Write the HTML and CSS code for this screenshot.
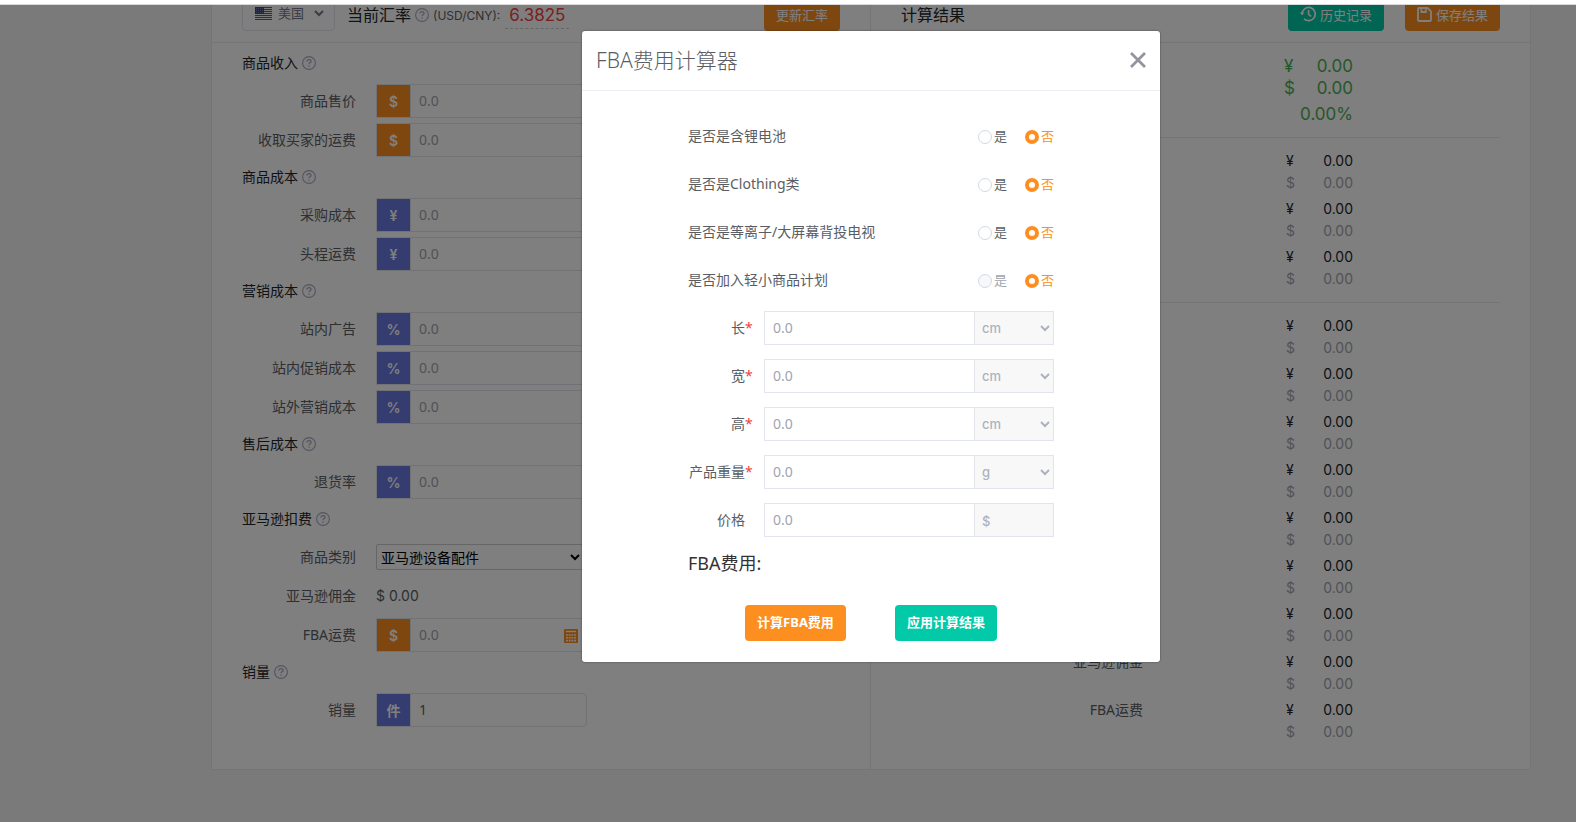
FILE: index.html
```html
<!DOCTYPE html>
<html lang="zh-CN">
<head>
  <meta charset="UTF-8">
  <title>FBA费用计算器</title>
  <link rel="stylesheet" href="styles.css">
</head>
<body>

  <svg class="sprite" aria-hidden="true">
    <symbol id="help" viewBox="0 0 14 14">
      <circle cx="7" cy="7" r="6.4" fill="none" stroke="currentColor" stroke-width="1.1"/>
      <path d="M5 5.6c0-1.3.9-2 2-2s2 .7 2 1.8c0 1.4-2 1.5-2 2.9M7 9.4v1.3" fill="none" stroke="currentColor" stroke-width="1.3"/>
    </symbol>
  </svg>

  <div class="topbar"></div>

  <div class="page">
    <main class="calculator">

      <section class="panel">
        <header class="panel-head">
          <div class="country">
            <svg class="flag" viewBox="0 0 17 13" width="17" height="13">
              <rect width="17" height="13" fill="#f5f5f5"/>
              <path d="M0 .5h17M0 2.5h17M0 4.5h17M0 6.5h17M0 8.5h17M0 10.5h17M0 12.5h17" stroke="#c4324b"/>
              <rect width="9" height="7" fill="#3c4a7c"/>
              <path d="M1 1.5h7M1 3.5h7M1 5.5h7" stroke="#8f9bc4" stroke-width=".7" stroke-dasharray="1 1"/>
            </svg>
            <select aria-label="国家"><option>美国</option></select>
          </div>
          <h3 class="rate-title">当前汇率</h3>
          <svg class="help"><use href="#help"/></svg>
          <span class="pair">(USD/CNY):</span>
          <span class="rate">6.3825</span>
          <button class="btn btn-orange push">更新汇率</button>
        </header>

        <div class="panel-body">
          <h4>商品收入<svg class="help"><use href="#help"/></svg></h4>
          <div class="row">
            <label for="price">商品售价</label>
            <div class="group"><span class="unit orange">$</span><input id="price" placeholder="0.0"></div>
          </div>
          <div class="row">
            <label for="buyerShip">收取买家的运费</label>
            <div class="group"><span class="unit orange">$</span><input id="buyerShip" placeholder="0.0"></div>
          </div>

          <h4>商品成本<svg class="help"><use href="#help"/></svg></h4>
          <div class="row">
            <label for="purchase">采购成本</label>
            <div class="group"><span class="unit">¥</span><input id="purchase" placeholder="0.0"></div>
          </div>
          <div class="row">
            <label for="firstLeg">头程运费</label>
            <div class="group"><span class="unit">¥</span><input id="firstLeg" placeholder="0.0"></div>
          </div>

          <h4>营销成本<svg class="help"><use href="#help"/></svg></h4>
          <div class="row">
            <label for="ads">站内广告</label>
            <div class="group"><span class="unit">%</span><input id="ads" placeholder="0.0"></div>
          </div>
          <div class="row">
            <label for="promo">站内促销成本</label>
            <div class="group"><span class="unit">%</span><input id="promo" placeholder="0.0"></div>
          </div>
          <div class="row">
            <label for="offsite">站外营销成本</label>
            <div class="group"><span class="unit">%</span><input id="offsite" placeholder="0.0"></div>
          </div>

          <h4>售后成本<svg class="help"><use href="#help"/></svg></h4>
          <div class="row">
            <label for="returns">退货率</label>
            <div class="group"><span class="unit">%</span><input id="returns" placeholder="0.0"></div>
          </div>

          <h4>亚马逊扣费<svg class="help"><use href="#help"/></svg></h4>
          <div class="row">
            <label for="category">商品类别</label>
            <select id="category" class="category"><option>亚马逊设备配件</option></select>
          </div>
          <div class="row">
            <span class="row-label">亚马逊佣金</span>
            <span class="commission">$ 0.00</span>
          </div>
          <div class="row">
            <label for="fbaFee">FBA运费</label>
            <div class="group">
              <span class="unit orange">$</span><input id="fbaFee" placeholder="0.0">
              <button class="calc" aria-label="计算FBA费用">
                <svg viewBox="0 0 14 14" width="14" height="14">
                  <rect width="14" height="14" rx="1" fill="#fd8f20"/>
                  <path d="M2 2.5h10" stroke="#fff" stroke-width="1.4"/>
                  <path d="M2 6h10M2 8.8h10M2 11.6h10" stroke="#fff" stroke-width="1.6" stroke-dasharray="1.9 .8"/>
                </svg>
              </button>
            </div>
          </div>

          <h4>销量<svg class="help"><use href="#help"/></svg></h4>
          <div class="row">
            <label for="sales">销量</label>
            <div class="group"><span class="unit">件</span><input id="sales" value="1"></div>
          </div>
        </div>
      </section>

      <section class="panel">
        <header class="panel-head">
          <h3>计算结果</h3>
          <button class="btn btn-teal push">
            <svg viewBox="0 0 16 16" width="16" height="16" fill="none" stroke="currentColor" stroke-width="1.7">
              <path d="M2 8a6.6 6.6 0 1 1 2 4.8M8.6 4v4.4l2.6 2"/>
              <path d="M0 6.6h4.4L2 9.6z" fill="currentColor" stroke="none"/>
            </svg>
            历史记录
          </button>
          <button class="btn btn-orange save">
            <svg viewBox="0 0 15 15" width="15" height="15" fill="none" stroke="currentColor" stroke-width="1.8">
              <path d="M2 1h8.6L14 4.4V13a1 1 0 0 1-1 1H2a1 1 0 0 1-1-1V2a1 1 0 0 1 1-1zM4.4 1v4h4.4V1"/>
            </svg>
            保存结果
          </button>
        </header>

        <div class="results">
          <div class="result big">
            <span class="name">利润</span>
            <div class="amounts"><p><span>¥</span><span>0.00</span></p><p><span>$</span><span>0.00</span></p></div>
          </div>
          <div class="result big">
            <span class="name">利润率</span>
            <div class="amounts"><p class="percent">0.00%</p></div>
          </div>
          <hr>
          <div class="result">
            <span class="name">总收入</span>
            <div class="amounts"><p><span>¥</span><span>0.00</span></p><p><span>$</span><span>0.00</span></p></div>
          </div>
          <div class="result">
            <span class="name">商品售价</span>
            <div class="amounts"><p><span>¥</span><span>0.00</span></p><p><span>$</span><span>0.00</span></p></div>
          </div>
          <div class="result">
            <span class="name">买家运费</span>
            <div class="amounts"><p><span>¥</span><span>0.00</span></p><p><span>$</span><span>0.00</span></p></div>
          </div>
          <hr>
          <div class="result">
            <span class="name">总成本</span>
            <div class="amounts"><p><span>¥</span><span>0.00</span></p><p><span>$</span><span>0.00</span></p></div>
          </div>
          <div class="result">
            <span class="name">采购成本</span>
            <div class="amounts"><p><span>¥</span><span>0.00</span></p><p><span>$</span><span>0.00</span></p></div>
          </div>
          <div class="result">
            <span class="name">头程运费</span>
            <div class="amounts"><p><span>¥</span><span>0.00</span></p><p><span>$</span><span>0.00</span></p></div>
          </div>
          <div class="result">
            <span class="name">站内广告</span>
            <div class="amounts"><p><span>¥</span><span>0.00</span></p><p><span>$</span><span>0.00</span></p></div>
          </div>
          <div class="result">
            <span class="name">站内促销成本</span>
            <div class="amounts"><p><span>¥</span><span>0.00</span></p><p><span>$</span><span>0.00</span></p></div>
          </div>
          <div class="result">
            <span class="name">站外营销成本</span>
            <div class="amounts"><p><span>¥</span><span>0.00</span></p><p><span>$</span><span>0.00</span></p></div>
          </div>
          <div class="result">
            <span class="name">退货成本</span>
            <div class="amounts"><p><span>¥</span><span>0.00</span></p><p><span>$</span><span>0.00</span></p></div>
          </div>
          <div class="result">
            <span class="name">亚马逊佣金</span>
            <div class="amounts"><p><span>¥</span><span>0.00</span></p><p><span>$</span><span>0.00</span></p></div>
          </div>
          <div class="result">
            <span class="name">FBA运费</span>
            <div class="amounts"><p><span>¥</span><span>0.00</span></p><p><span>$</span><span>0.00</span></p></div>
          </div>
        </div>
      </section>

    </main>

    <div class="overlay">
      <div class="modal" role="dialog" aria-labelledby="modalTitle">
        <header class="modal-head">
          <h2 id="modalTitle">FBA费用计算器</h2>
          <button class="close" aria-label="关闭">
            <svg viewBox="0 0 16 16" width="16" height="16"><path d="M1 1l14 14M15 1L1 15" stroke="currentColor" stroke-width="2.8"/></svg>
          </button>
        </header>

        <form class="modal-body">
          <div class="question">
            <span>是否是含锂电池</span>
            <label><input type="radio" name="battery">是</label>
            <label><input type="radio" name="battery" checked>否</label>
          </div>
          <div class="question">
            <span>是否是Clothing类</span>
            <label><input type="radio" name="clothing">是</label>
            <label><input type="radio" name="clothing" checked>否</label>
          </div>
          <div class="question">
            <span>是否是等离子/大屏幕背投电视</span>
            <label><input type="radio" name="tv">是</label>
            <label><input type="radio" name="tv" checked>否</label>
          </div>
          <div class="question">
            <span>是否加入轻小商品计划</span>
            <label><input type="radio" name="light" disabled>是</label>
            <label><input type="radio" name="light" checked>否</label>
          </div>

          <div class="field">
            <label for="len">长</label><span class="star">*</span>
            <input id="len" placeholder="0.0">
            <select aria-label="长单位"><option>cm</option></select>
          </div>
          <div class="field">
            <label for="wid">宽</label><span class="star">*</span>
            <input id="wid" placeholder="0.0">
            <select aria-label="宽单位"><option>cm</option></select>
          </div>
          <div class="field">
            <label for="hei">高</label><span class="star">*</span>
            <input id="hei" placeholder="0.0">
            <select aria-label="高单位"><option>cm</option></select>
          </div>
          <div class="field">
            <label for="weight">产品重量</label><span class="star">*</span>
            <input id="weight" placeholder="0.0">
            <select aria-label="重量单位"><option>g</option></select>
          </div>
          <div class="field">
            <label for="cost">价格</label><span class="star"></span>
            <input id="cost" placeholder="0.0">
            <span class="addon">$</span>
          </div>

          <p class="fee">FBA费用:</p>
          <div class="actions">
            <button type="button" class="btn btn-orange">计算FBA费用</button>
            <button type="button" class="btn btn-teal">应用计算结果</button>
          </div>
        </form>
      </div>
    </div>
  </div>

</body>
</html>
```
FILE: styles.css
```css
* {
  box-sizing: border-box;
}
body {
  margin: 0;
  height: 100vh;
  display: flex;
  flex-direction: column;
  overflow: hidden;
  font-family: "Noto Sans", "Noto Sans CJK SC", sans-serif;
  font-size: 14px;
  line-height: 22px;
  color: #5a5e64;
}
h2, h3, h4, p {
  margin: 0;
  font-weight: 400;
}
input, select, button {
  font-family: inherit;
  font-size: 14px;
  color: inherit;
  margin: 0;
}
.sprite {
  display: none;
}
.topbar {
  flex: none;
  height: 5px;
  background: #fff;
  border-bottom: 1px solid #d9d9d9;
}
.page {
  flex: 1;
  position: relative;
  overflow: hidden;
  background: #f5f5f5;
}

/* calculator is scrolled a little way under the top bar */
.calculator {
  display: grid;
  grid-template-columns: calc(50% - 1px) 1fr;
  margin: -22px 45px 0 211px;
  background: #fff;
  border: 1px solid #ebebeb;
}
.panel + .panel {
  border-left: 1px solid #ebebeb;
}
.panel-head {
  display: flex;
  align-items: center;
  height: 59px;
  padding: 0 30px;
  border-bottom: 1px solid #ebebeb;
}
.panel-head h3 {
  padding-top: 4px;
  font-size: 16px;
  line-height: 16px;
  color: #212529;
}
.push {
  margin-left: auto;
}
.save {
  margin-left: 21px;
}
.btn {
  display: inline-flex;
  align-items: center;
  gap: 4px;
  height: 36px;
  padding: 0 12px;
  border: 0;
  border-radius: 4px;
  color: #fff;
  font-size: 13px;
}
.panel-head .btn, .country {
  padding-top: 2px;
}
.btn-orange {
  background: #fd8f20;
}
.btn-teal {
  background: #02caa8;
}
.country {
  display: flex;
  align-items: center;
  width: 93px;
  height: 36px;
  padding: 0 7px 0 12px;
  border: 1px solid #e2e5ec;
  border-radius: 4px;
}
.country select {
  flex: 1;
  border: 0;
  padding: 0 0 0 2px;
  background: none;
  font-size: 13px;
  color: #74788d;
}
.rate-title {
  margin-left: 12px;
}
.help {
  flex: none;
  width: 14px;
  height: 14px;
  margin-left: 4px;
  color: #a7abc0;
}
.panel-head .help {
  margin-top: 4px;
}
.pair {
  margin: 5px 0 0 4px;
  font-family: Inter, sans-serif;
  font-size: 12px;
}
.rate {
  margin: 8px 0 0 5px;
  padding: 0 4px 4px;
  border-bottom: 1px dashed #ccc;
  font-family: Inter, sans-serif;
  font-size: 17px;
  line-height: 18px;
  color: #f5403c;
}

.panel-body {
  padding: 5px 30px 37px;
}
.panel-body h4 {
  display: flex;
  align-items: center;
  height: 30px;
  margin-bottom: 6px;
  color: #212529;
  font-size: 14px;
}
.row {
  display: flex;
  align-items: center;
  height: 34px;
  margin-bottom: 5px;
}
.row > label, .row-label {
  width: 114px;
  margin-right: 20px;
  text-align: right;
}
.group {
  position: relative;
  display: flex;
  width: 211px;
  height: 34px;
  border: 1px solid #e2e5ec;
  border-radius: 0 4px 4px 0;
}
.group input {
  flex: 1;
  min-width: 0;
  padding: 0 8px 2px;
  border: 0;
  border-left: 1px solid #e2e5ec;
  background: none;
}
input::placeholder {
  color: #a1a5ad;
}
.unit {
  width: 33px;
  background: #6b78e0;
  color: #fff;
  font-family: Inter, "Noto Sans CJK SC", sans-serif;
  font-weight: 600;
  line-height: 34px;
  text-align: center;
}
.unit.orange {
  background: #fd8f20;
}
.calc {
  position: absolute;
  top: 10px;
  right: 8px;
  display: flex;
  padding: 0;
  border: 0;
  background: none;
}
.category {
  width: 208px;
  height: 26px;
  border: 1px solid #ccc;
  border-radius: 2px;
  background: #fff;
  color: #000;
}
.commission {
  font-family: Inter, sans-serif;
}

.results {
  padding: 12px 30px 0;
}
.results hr {
  margin: 12px 0;
  border: 0;
  border-top: 1px solid #ebebeb;
}
.result {
  display: flex;
  justify-content: space-between;
  margin-bottom: 4px;
  padding-right: 147px;
}
.result .name {
  width: 242px;
  text-align: right;
}
.amounts {
  width: 67px;
  font-family: Inter, sans-serif;
  color: #a1a5ad;
}
.amounts p {
  display: flex;
  justify-content: space-between;
}
.amounts p:first-child {
  color: #212529;
}
.big .amounts {
  width: 69px;
  font-size: 17px;
}
.big .amounts p {
  color: #4caf50;
}
.amounts .percent {
  justify-content: flex-end;
}

.overlay {
  position: absolute;
  inset: 0;
  padding: 26px 0 0 166px;
  background: rgba(0, 0, 0, 0.5);
}
.modal {
  width: 578px;
  margin: 0 auto;
  background: #fff;
  border-radius: 3px;
  box-shadow: 0 0 2px rgba(0, 0, 0, 0.5);
}
.modal-head {
  display: flex;
  align-items: center;
  justify-content: space-between;
  height: 60px;
  padding: 0 14px 2px;
  border-bottom: 1px solid #ebedf2;
}
.modal-head h2 {
  font-size: 21px;
  font-weight: 300;
}
.close {
  display: flex;
  padding: 0;
  border: 0;
  background: none;
  color: #93949f;
}
.modal-body {
  width: 366px;
  margin: 0 auto;
  padding: 28px 0 21px;
}
.question {
  display: flex;
  align-items: center;
  height: 34px;
  margin-bottom: 14px;
}
.question span {
  margin-right: auto;
}
.question label {
  display: flex;
  align-items: center;
  gap: 2px;
  margin-left: 18px;
  font-size: 13px;
}
.question input {
  appearance: none;
  width: 14px;
  height: 14px;
  margin-top: 2px;
  border: 1px solid #d5d8e2;
  border-radius: 50%;
  background: #fff;
}
.question input:checked {
  border: 4px solid #fd8f20;
}
.question label:has(:checked) {
  color: #fd8f20;
}
.question input:disabled {
  background: #f7f8fa;
}
.question label:has(:disabled) {
  color: #a1a5ad;
}
.field {
  display: flex;
  align-items: center;
  height: 34px;
  margin-bottom: 14px;
}
.field label {
  width: 57px;
  text-align: right;
}
.star {
  width: 19px;
  color: #f5403c;
}
.field input {
  flex: 1;
  min-width: 0;
  height: 34px;
  padding: 0 8px 2px;
  border: 1px solid #e2e5ec;
  border-right: 0;
}
.field select, .addon {
  width: 80px;
  height: 34px;
  border: 1px solid #e2e5ec;
  border-radius: 0;
  background: #f8f8f8;
  color: #adb3bd;
  font-family: Inter, sans-serif;
  font-size: 13px;
  font-weight: 500;
}
.field select {
  padding: 0 0 0 3px;
}
.addon {
  padding-left: 7px;
  line-height: 34px;
}
.fee {
  margin-bottom: 30px;
  font-size: 18px;
  line-height: 24px;
  color: #333;
}
.actions {
  display: flex;
  justify-content: center;
  gap: 49px;
}
.actions .btn {
  padding-bottom: 3px;
  font-weight: 700;
}
```
